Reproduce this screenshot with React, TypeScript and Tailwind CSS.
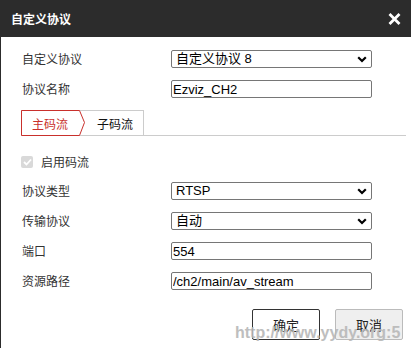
import React from 'react'

const cjk = { fontFamily: '"Noto Sans CJK SC", "Liberation Sans", sans-serif' }
const field = { fontFamily: '"Liberation Sans", "Noto Sans CJK SC", sans-serif' }

const Chevron = () => (
  <svg className="pointer-events-none absolute right-[5px] top-[6px]" width="10" height="7" viewBox="0 0 10 7">
    <path d="M1.2 1.2 L5 5 L8.8 1.2" fill="none" stroke="#000" strokeWidth="2.2" />
  </svg>
)

const SelectField: React.FC<{ value: string }> = ({ value }) => (
  <div className="relative h-[18px] w-[201px]">
    <select
      defaultValue={value}
      className="block h-[18px] w-full appearance-none rounded-[2px] border border-[#767676] bg-white pl-[4px] text-[13px] leading-[16px] text-black outline-none"
      style={field}
    >
      <option>{value}</option>
    </select>
    <Chevron />
  </div>
)

const TextField: React.FC<{ value: string }> = ({ value }) => (
  <input
    defaultValue={value}
    className="block h-[18px] w-[201px] rounded-[2px] border border-[#767676] bg-white pl-[1px] text-[13px] leading-[16px] text-black outline-none"
    style={field}
  />
)

const Row: React.FC<{ label: string; children: React.ReactNode }> = ({ label, children }) => (
  <div className="flex h-[30px] items-center">
    <div className="w-[150px] pl-[1px] text-[12px] leading-[16px] text-[#333]" style={cjk}>{label}</div>
    {children}
  </div>
)

export default function App() {
  return (
    <div className="relative h-[348px] w-[411px] overflow-hidden bg-white" style={cjk}>
      {/* title bar */}
      <div className="flex h-[37px] items-center justify-between bg-[#2c2c2c] pl-[11px] pr-[10px]">
        <span className="text-[12px] font-bold text-white">自定义协议</span>
        <svg width="13" height="12" viewBox="0 0 13 12">
          <path d="M1.5 1 L11.5 11 M11.5 1 L1.5 11" stroke="#fff" strokeWidth="2.8" />
        </svg>
      </div>

      <div className="h-[311px] border-l border-[#2c2c2c] pl-[20px] pt-[7px]">
        <Row label="自定义协议">
          <SelectField value="自定义协议 8" />
        </Row>
        <Row label="协议名称">
          <TextField value="Ezviz_CH2" />
        </Row>

        {/* tabs */}
        <div className="mr-[5px] mt-[6px] flex h-[26px] border-b border-[#cccccc]">
          <div className="flex w-[123px] border-l border-r border-t border-[#cccccc]">
            <div className="relative h-[25px] w-[64px]">
              <svg className="absolute -left-px -top-px" width="66" height="26" viewBox="0 0 66 26">
                <path d="M0.5 0.5 H58.5 L63.5 12.5 L58.5 25.5 H0.5 Z" fill="#fff" stroke="#c9302c" strokeWidth="1" />
              </svg>
              <span className="absolute left-[10px] top-[4px] text-[12px] text-[#c9302c]">主码流</span>
            </div>
            <span className="ml-[11px] pt-[4px] text-[12px] text-[#111]">子码流</span>
          </div>
        </div>

        {/* enable checkbox */}
        <div className="flex h-[40px] items-center pt-[12px]">
          <div className="flex h-[12px] w-[12px] items-center justify-center rounded-[2px] bg-[#d9d9d9]">
            <svg width="9" height="8" viewBox="0 0 9 8">
              <path d="M1 4 L3.5 6.5 L8 1.5" fill="none" stroke="#fff" strokeWidth="1.8" />
            </svg>
          </div>
          <span className="ml-[8px] text-[12px] leading-[16px] text-[#333]">启用码流</span>
        </div>

        <Row label="协议类型">
          <SelectField value="RTSP" />
        </Row>
        <Row label="传输协议">
          <SelectField value="自动" />
        </Row>
        <Row label="端口">
          <TextField value="554" />
        </Row>
        <Row label="资源路径">
          <TextField value="/ch2/main/av_stream" />
        </Row>

        <div className="mt-[13px] flex justify-end gap-[15px] pr-[8px]">
          <button className="h-[31px] w-[68px] rounded-[2px] border border-[#333] bg-white text-[13px] text-[#222]">确定</button>
          <button className="h-[31px] w-[68px] rounded-[2px] border border-[#bbbbbb] bg-[#efefef] text-[13px] text-[#222]">取消</button>
        </div>
      </div>

      {/* watermark */}
      <div
        className="pointer-events-none absolute left-[235px] top-[323px] text-[16px] font-bold leading-[20px] text-[#b8b8b8] opacity-90"
        style={{ fontFamily: '"Liberation Sans", sans-serif' }}
      >
        http://www.yydy.org:5
      </div>
    </div>
  )
}
